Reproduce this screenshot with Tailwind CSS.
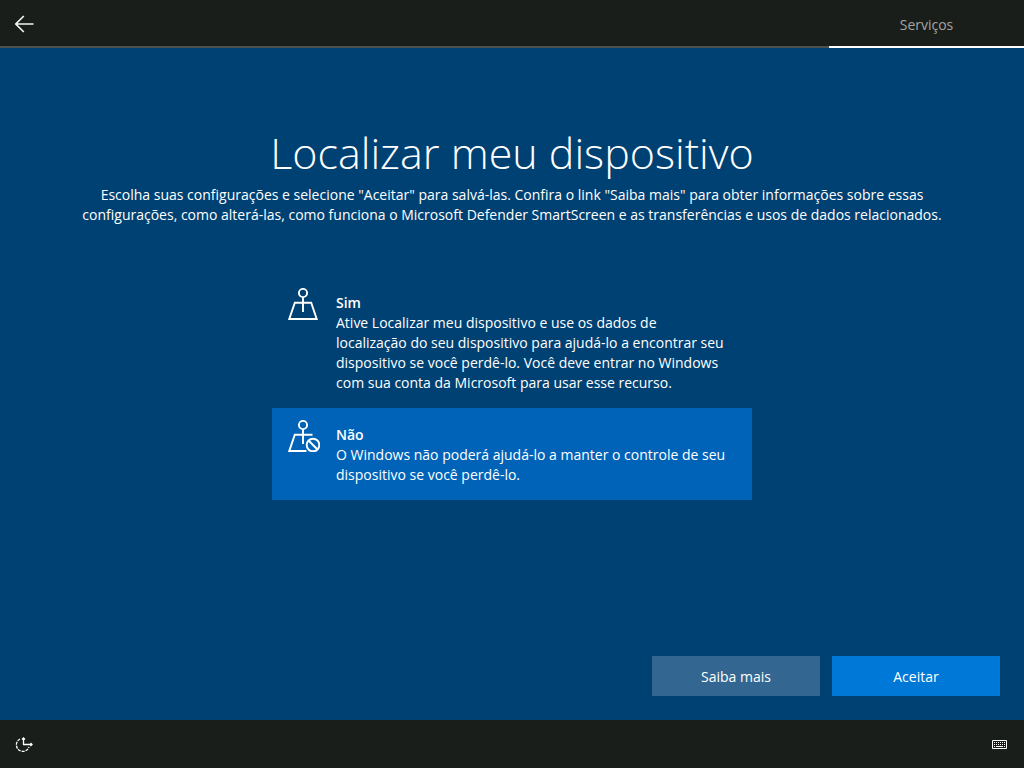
<!DOCTYPE html>
<html lang="pt-BR">
<head>
<meta charset="utf-8">
<meta name="viewport" content="width=device-width, initial-scale=1">
<title>Localizar meu dispositivo</title>
<script src="https://cdn.jsdelivr.net/npm/@tailwindcss/browser@4"></script>
</head>
<body class="flex min-h-screen flex-col bg-[#004173] font-['Segoe_UI','Open_Sans',sans-serif] text-sm leading-5 text-white">
  <header class="flex h-12 shrink-0 items-stretch justify-between bg-[#191e1a]">
    <div class="flex grow items-center border-b-2 border-[#4e504e] pt-0.5 pl-3">
      <button type="button" aria-label="Voltar" class="flex size-6 items-center justify-center">
        <svg class="size-6" viewBox="0 0 24 24" fill="none" stroke="#f2f2f2" stroke-width="1.7"><path d="M21.500 12H4M11.800 4 3.800 12l8 8"/></svg>
      </button>
    </div>
    <nav class="flex w-[195px] items-center justify-center border-b-2 border-white pt-1 text-[#a3a5a3]">
      <a href="#servicos" aria-current="page">Serviços</a>
    </nav>
  </header>

  <main class="flex grow flex-col px-6 pt-[73px] pb-6">
    <h1 id="titulo" class="text-center text-[43px] leading-[64px] font-light">Localizar meu dispositivo</h1>
    <p class="text-center">Escolha suas configurações e selecione "Aceitar" para salvá-las. Confira o link "Saiba mais" para obter informações sobre essas<br>configurações, como alterá-las, como funciona o Microsoft Defender SmartScreen e as transferências e usos de dados relacionados.</p>

    <div role="radiogroup" aria-labelledby="titulo" class="mx-auto mt-[51px] w-full max-w-[480px]">
      <label class="flex cursor-pointer gap-4 px-4 pt-[17px] pb-[15px]">
        <input type="radio" name="localizar" value="sim" class="sr-only">
        <svg class="-mt-[5px] size-8 shrink-0" viewBox="0 0 32 32" fill="none" stroke="#fff" stroke-width="1.900"><circle cx="15" cy="5" r="4.100"/><path d="M15 9v15M6.800 14.800 1.300 31h27.400l-5.500-16.200H6.800Z"/></svg>
        <span><b class="block font-semibold">Sim</b>Ative Localizar meu dispositivo e use os dados de<br>localização do seu dispositivo para ajudá-lo a encontrar seu<br>dispositivo se você perdê-lo. Você deve entrar no Windows<br>com sua conta da Microsoft para usar esse recurso.</span>
      </label>
      <label class="flex cursor-pointer gap-4 bg-[#0063b8] px-4 pt-[17px] pb-[15px]">
        <input type="radio" name="localizar" value="nao" checked class="sr-only">
        <svg class="-mt-[5px] size-8 shrink-0" viewBox="0 0 32 32" fill="none" stroke="#fff" stroke-width="1.900"><circle cx="15" cy="5" r="4.100"/><path d="M15 9v15M24.500 14.800H6.800L1.300 31h17.200"/><circle cx="25" cy="25" r="6.300"/><path d="m20.500 20.500 9 9"/></svg>
        <span><b class="block font-semibold">Não</b>O Windows não poderá ajudá-lo a manter o controle de seu<br>dispositivo se você perdê-lo.</span>
      </label>
    </div>

    <div class="mt-auto flex justify-end gap-3">
      <button type="button" class="h-10 w-[168px] bg-[#336791] pt-0.5">Saiba mais</button>
      <button type="button" class="h-10 w-[168px] bg-[#0078d8] pt-0.5">Aceitar</button>
    </div>
  </main>

  <footer class="flex h-12 shrink-0 items-center justify-between bg-[#191e1a] px-3">
    <button type="button" aria-label="Facilidade de acesso" class="flex size-6 items-center justify-center">
      <svg class="size-6" viewBox="0 0 24 24" fill="none" stroke="#fff" stroke-width="1.300"><path d="M8 7a6.500 6.500 0 1 0 9 8" stroke-dasharray="3 1"/><path d="M11.500 6v7M10 7.500l1.500-1.500 1.500 1.500M11 12.500h9M18.500 11l1.500 1.500-1.500 1.500"/></svg>
    </button>
    <button type="button" aria-label="Teclado virtual" class="flex size-6 items-center justify-center">
      <svg class="size-6" viewBox="0 0 24 24" fill="none" stroke="#fff"><path d="M4.500 8.500h14v8h-14z"/><path d="M6 10.500h11M6 12.500h11" stroke-dasharray="1 1"/><path d="M6 14.500h1M8 14.500h7M16 14.500h1"/></svg>
    </button>
  </footer>
</body>
</html>
